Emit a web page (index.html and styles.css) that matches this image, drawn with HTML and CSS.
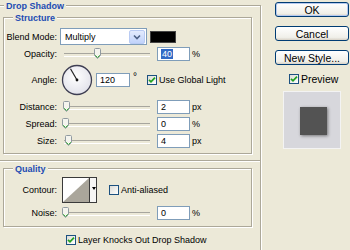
FILE: index.html
```html
<!DOCTYPE html>
<html lang="en">
<head>
    <meta charset="UTF-8">
    <meta name="viewport" content="width=device-width, initial-scale=1.0">
    <title>Drop Shadow</title>
    <link rel="stylesheet" href="styles.css">
</head>
<body>

<div class="dialog">
    <div class="main">
        <div class="panel group">
            <span class="group-title">Drop Shadow</span>

            <div class="group structure">
                <span class="group-title">Structure</span>

                <div class="row blend-row">
                    <span class="name">Blend Mode:</span>
                    <div class="select">
                        <span class="select-text">Multiply</span>
                        <span class="select-btn">
                            <svg width="8" height="6" viewBox="0 0 8 6"><path d="M1 1.5 L4 4.5 L7 1.5" fill="none" stroke="#4d6185" stroke-width="1.6"/></svg>
                        </span>
                    </div>
                    <span class="swatch"></span>
                </div>

                <div class="row slider-row opacity-row">
                    <span class="name">Opacity:</span>
                    <div class="slider"><span class="thumb" style="left: 32px"></span></div>
                    <span class="field"><span class="selected">40</span></span>
                    <span class="unit">%</span>
                </div>

                <div class="row angle-row">
                    <span class="name">Angle:</span>
                    <svg class="dial" width="32" height="32" viewBox="0 0 32 32">
                        <defs>
                            <radialGradient id="dialFill" cx="45%" cy="40%" r="60%">
                                <stop offset="0" stop-color="#ffffff"/>
                                <stop offset="1" stop-color="#e2e2ea"/>
                            </radialGradient>
                        </defs>
                        <circle cx="16" cy="16" r="14.5" fill="url(#dialFill)" stroke="#3e3e52" stroke-width="1.3"/>
                        <line x1="16" y1="16" x2="9.5" y2="4.8" stroke="#222" stroke-width="1.2"/>
                        <circle cx="16" cy="16" r="1.4" fill="#111"/>
                    </svg>
                    <span class="field angle-field">120</span>
                    <span class="degree">°</span>
                    <label class="check global-light"><span class="box checked"></span>Use Global Light</label>
                </div>

                <div class="row slider-row">
                    <span class="name">Distance:</span>
                    <div class="slider"><span class="thumb" style="left: 1px"></span></div>
                    <span class="field">2</span>
                    <span class="unit">px</span>
                </div>

                <div class="row slider-row">
                    <span class="name">Spread:</span>
                    <div class="slider"><span class="thumb" style="left: 0"></span></div>
                    <span class="field">0</span>
                    <span class="unit">%</span>
                </div>

                <div class="row slider-row">
                    <span class="name">Size:</span>
                    <div class="slider"><span class="thumb" style="left: 3px"></span></div>
                    <span class="field">4</span>
                    <span class="unit">px</span>
                </div>
            </div>
        </div>

        <div class="panel panel-lower group">
            <div class="group quality">
                <span class="group-title">Quality</span>

                <div class="row contour-row">
                    <span class="name">Contour:</span>
                    <div class="contour">
                        <svg class="curve" width="26" height="24" viewBox="0 0 26 24"><polygon points="0,24 26,0 26,24" fill="#aaa69b"/></svg>
                        <span class="contour-btn"></span>
                    </div>
                    <label class="check anti-alias"><span class="box"></span>Anti-aliased</label>
                </div>

                <div class="row slider-row">
                    <span class="name">Noise:</span>
                    <div class="slider"><span class="thumb" style="left: 0"></span></div>
                    <span class="field">0</span>
                    <span class="unit">%</span>
                </div>
            </div>

            <label class="check knock"><span class="box checked"></span>Layer Knocks Out Drop Shadow</label>
        </div>
    </div>

    <div class="side">
        <button class="default">OK</button>
        <button>Cancel</button>
        <button>New Style...</button>
        <label class="check preview-check"><span class="box checked"></span>Preview</label>
        <div class="preview">
            <div class="preview-square"></div>
        </div>
    </div>
</div>

</body>
</html>
```

FILE: styles.css
```css
* {
    box-sizing: border-box;
}
body {
    margin: 0;
    background-color: #ece9d8;
    font-family: "Liberation Sans", Arial, sans-serif;
    font-size: 9px;
    color: #000;
    overflow: hidden;
}
.dialog {
    display: flex;
    width: 350px;
    height: 250px;
    overflow: hidden;
}

/* group boxes */
.group {
    border: 1px solid #aca899;
    box-shadow: 1px 1px 0 #fff, inset 1px 1px 0 #fff;
}
.group-title {
    display: block;
    width: fit-content;
    height: 12px;
    line-height: 12px;
    margin: -6px 0 0 9px;
    padding: 0 2px;
    background-color: #ece9d8;
    color: #1d4cb3;
    font-weight: bold;
}
.main {
    flex: none;
    width: 264px;
    margin: 5px 0 0 -3px;
}
.panel {
    padding-bottom: 6px;
}
.panel > .group-title {
    margin-left: 6px;
}
.panel-lower {
    height: 100px;
    border-top: none;
    box-shadow: 1px 0 0 #fff, inset 1px 0 0 #fff;
    padding-top: 7px;
}
.structure {
    width: 249px;
    margin: 5px 0 0 5px;
    padding: 0 0 5px 0;
}
.quality {
    width: 249px;
    margin: 0 0 0 5px;
    padding: 0 0 6px 0;
}

/* rows */
.row {
    display: flex;
    align-items: center;
    height: 14px;
    margin-top: 3px;
}
.name {
    width: 53px;
    text-align: right;
    margin-right: 3px;
}
.blend-row {
    height: 17px;
    margin-top: 4px;
}
.opacity-row {
    margin-top: 2px;
}
.angle-row {
    height: 32px;
    margin-top: 3px;
}
.angle-row + .slider-row {
    margin-top: 4px;
}

/* select */
.select {
    display: flex;
    align-items: center;
    width: 87px;
    height: 17px;
    border: 1px solid #7f9db9;
    background-color: #fff;
    padding: 1px;
}
.select-text {
    flex: 1;
    padding-left: 3px;
}
.select-btn {
    display: flex;
    align-items: center;
    justify-content: center;
    width: 16px;
    height: 14px;
    border: 1px solid #b9cbf3;
    border-radius: 2px;
    background: linear-gradient(#e3ebfd, #c1d3fb);
}
.swatch {
    width: 26px;
    height: 12px;
    margin-left: 3px;
    background-color: #000;
    border: 1px solid #444;
}

/* slider */
.slider {
    position: relative;
    width: 88px;
    height: 14px;
    margin-left: 2px;
}
.slider::before {
    content: "";
    position: absolute;
    left: 2px;
    right: 0;
    top: 6px;
    height: 2px;
    border-top: 1px solid #a7a69e;
    border-bottom: 1px solid #fff;
}
.thumb {
    position: absolute;
    top: 1px;
    width: 7px;
    height: 11px;
    background: url("data:image/svg+xml,%3Csvg xmlns='http://www.w3.org/2000/svg' width='7' height='11'%3E%3Cpath d='M0.5 1.5Q0.5 0.5 1.5 0.5H5.5Q6.5 0.5 6.5 1.5V7.5L3.5 10.5L0.5 7.5Z' fill='%23f4f4ee' stroke='%23909aa0'/%3E%3Cpath d='M1.2 7.2L3.5 9.5L5.8 7.2' fill='none' stroke='%2340b040' stroke-width='1'/%3E%3C/svg%3E") no-repeat;
}

/* inputs */
.field {
    display: flex;
    align-items: center;
    width: 33px;
    height: 14px;
    margin-left: 7px;
    padding-left: 3px;
    border: 1px solid #7f9db9;
    background-color: #fff;
}
.selected {
    background-color: #316ac5;
    color: #fff;
    padding: 0 1px;
    line-height: 10px;
}
.unit {
    margin-left: 2px;
}
.dial {
    margin-left: 1px;
}
.angle-field {
    width: 34px;
    margin-left: 3px;
}
.degree {
    align-self: flex-start;
    margin: 7px 0 0 3px;
    font-size: 10px;
}

/* checkboxes */
.check {
    display: flex;
    align-items: center;
    white-space: nowrap;
}
.box {
    width: 10px;
    height: 10px;
    margin-right: 2px;
    border: 1px solid #1c5180;
    background: linear-gradient(135deg, #dcdcd7, #fff);
}
.box.checked {
    background: url("data:image/svg+xml,%3Csvg xmlns='http://www.w3.org/2000/svg' width='8' height='8'%3E%3Cpath d='M1 3.8L3 5.8L7 1.6' fill='none' stroke='%2321a121' stroke-width='1.8'/%3E%3C/svg%3E") center no-repeat, linear-gradient(135deg, #dcdcd7, #fff);
}
.global-light {
    margin-left: 10px;
}

/* contour */
.contour-row {
    height: 26px;
    margin-top: 2px;
}
.contour {
    display: flex;
    width: 35px;
    height: 26px;
    margin-left: 2px;
    border: 1px solid #3a3a3a;
    background-color: #fff;
}
.contour-btn {
    position: relative;
    flex: 1;
    border-left: 1px solid #3a3a3a;
    background-color: #f6f6f4;
}
.contour-btn::after {
    content: "";
    position: absolute;
    left: 2px;
    top: 9px;
    border-left: 2px solid transparent;
    border-right: 2px solid transparent;
    border-top: 3px solid #000;
}
.anti-alias {
    margin-left: 12px;
}

.knock {
    margin: 8px 0 0 68px;
    height: 10px;
}

/* right column */
.side {
    display: flex;
    flex-direction: column;
    padding-left: 14px;
    padding-top: 2px;
    font-size: 10.5px;
}
button {
    width: 74px;
    height: 15px;
    margin-bottom: 9px;
    padding: 0;
    font-family: inherit;
    font-size: 10.5px;
    line-height: 12px;
    color: #000;
    border: 1px solid #003c74;
    border-radius: 3px;
    background: linear-gradient(#ffffff, #f0efe9 80%, #d8d2c6);
}
button.default {
    box-shadow: inset 0 0 0 1px #b6c9ef;
}
.preview-check {
    margin: -1px 0 0 14px;
    height: 11px;
}
.preview {
    width: 58px;
    height: 58px;
    margin: 7px 0 0 8px;
    padding: 15px 0 0 16px;
    background-color: #d7d7dc;
    border: 1px solid #f3f3f3;
}
.preview-square {
    width: 27px;
    height: 28px;
    background-color: #535353;
    box-shadow: 1px 1px 3px rgba(0, 0, 0, 0.45);
}
```
